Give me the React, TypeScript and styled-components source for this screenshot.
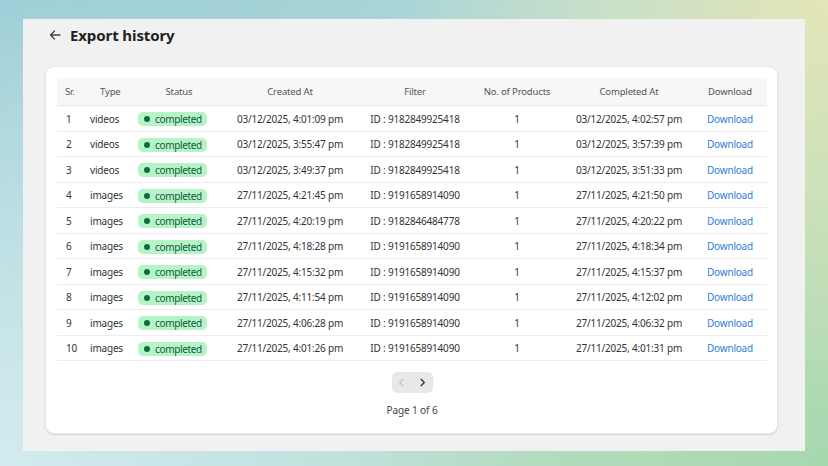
import React from 'react';
import styled, { createGlobalStyle } from 'styled-components';

const GlobalStyle = createGlobalStyle`
  html, body {
    margin: 0;
    padding: 0;
  }
  body {
    font-family: "Noto Sans", "Open Sans", Arial, sans-serif;
    width: 828px;
    height: 466px;
    overflow: hidden;
  }
`

const Backdrop = styled.div`
  width: 828px;
  height: 466px;
  box-sizing: border-box;
  padding: 19px 23px 15px 23px;
  background:
    radial-gradient(circle at 100% 0%, #e2e5b6 0%, rgba(226,229,182,0) 45%),
    radial-gradient(circle at 100% 100%, #a6d8ae 0%, rgba(166,216,174,0) 50%),
    radial-gradient(circle at 0% 100%, #d3ebee 0%, rgba(211,235,238,0) 55%),
    linear-gradient(135deg, #98cbd5 0%, #b3dbd9 50%, #c2e0c0 100%);
`

const Panel = styled.div`
  height: 100%;
  box-sizing: border-box;
  background: #f1f1f1;
  padding: 0 27px 17px 22px;
  display: flex;
  flex-direction: column;
`

const Header = styled.div`
  height: 47px;
  box-sizing: border-box;
  display: flex;
  align-items: center;
  gap: 9px;
  padding: 0 0 15px 4px;
`

const BackButton = styled.span`
  display: flex;
  align-items: center;
  color: #444;
`

const Title = styled.h1`
  margin: 0;
  font-size: 15px;
  font-weight: 700;
  color: #222;
  letter-spacing: -0.1px;
`

const Card = styled.div`
  flex: 1;
  background: #fff;
  border-radius: 9px;
  border: 1px solid #e6e6e6;
  box-shadow: 0 1px 2px rgba(0,0,0,0.12);
  padding: 11px 10px 0 11px;
  display: flex;
  flex-direction: column;
`

const cols = '25px 48px 98px 124px 126px 78px 146px 65px'

const HeadRow = styled.div`
  display: grid;
  grid-template-columns: ${cols};
  height: 27px;
  align-items: center;
  background: #f7f7f7;
  border-bottom: 1px solid #e8e8e8;
  font-size: 9.5px;
  letter-spacing: -0.15px;
  color: #555;
`

const Row = styled.div`
  display: grid;
  grid-template-columns: ${cols};
  height: 23.5px;
  padding-top: 1px;
  align-items: center;
  border-bottom: 1px solid #ececec;
  font-size: 10px;
  letter-spacing: -0.2px;
  color: #333;
`

const Cell = styled.div<{ $align?: 'left' | 'center'; $pl?: number; $pr?: number }>`
  text-align: ${p => p.$align || 'center'};
  padding-left: ${p => p.$pl || 0}px;
  padding-right: ${p => p.$pr || 0}px;
  white-space: nowrap;
`

const Badge = styled.span`
  display: inline-flex;
  align-items: center;
  gap: 5px;
  height: 14px;
  padding: 0 5px 0 6px;
  border-radius: 5px;
  background: #b6f3c6;
  color: #0f5c3c;
  font-size: 10px;
  letter-spacing: -0.35px;
`

const Dot = styled.span`
  width: 6px;
  height: 6px;
  border-radius: 50%;
  background: #0d6b47;
`

const Link = styled.a`
  color: #2f7ed8;
  text-decoration: none;
`

const Pager = styled.div`
  display: flex;
  flex-direction: column;
  align-items: center;
  padding-top: 11px;
  gap: 10px;
`

const PagerButtons = styled.div`
  display: flex;
  background: #e8e8e8;
  border-radius: 5px;
  height: 21px;
  width: 41px;
`

const PageBtn = styled.span<{ $disabled?: boolean }>`
  flex: 1;
  display: flex;
  align-items: center;
  justify-content: center;
  color: ${p => (p.$disabled ? '#c4c4c4' : '#333')};
`

const PageText = styled.div`
  font-size: 10px;
  letter-spacing: -0.1px;
  color: #444;
`

const records = [
  { type: 'videos', created: '03/12/2025, 4:01:09 pm', filter: '9182849925418', completed: '03/12/2025, 4:02:57 pm' },
  { type: 'videos', created: '03/12/2025, 3:55:47 pm', filter: '9182849925418', completed: '03/12/2025, 3:57:39 pm' },
  { type: 'videos', created: '03/12/2025, 3:49:37 pm', filter: '9182849925418', completed: '03/12/2025, 3:51:33 pm' },
  { type: 'images', created: '27/11/2025, 4:21:45 pm', filter: '9191658914090', completed: '27/11/2025, 4:21:50 pm' },
  { type: 'images', created: '27/11/2025, 4:20:19 pm', filter: '9182846484778', completed: '27/11/2025, 4:20:22 pm' },
  { type: 'images', created: '27/11/2025, 4:18:28 pm', filter: '9191658914090', completed: '27/11/2025, 4:18:34 pm' },
  { type: 'images', created: '27/11/2025, 4:15:32 pm', filter: '9191658914090', completed: '27/11/2025, 4:15:37 pm' },
  { type: 'images', created: '27/11/2025, 4:11:54 pm', filter: '9191658914090', completed: '27/11/2025, 4:12:02 pm' },
  { type: 'images', created: '27/11/2025, 4:06:28 pm', filter: '9191658914090', completed: '27/11/2025, 4:06:32 pm' },
  { type: 'images', created: '27/11/2025, 4:01:26 pm', filter: '9191658914090', completed: '27/11/2025, 4:01:31 pm' },
]

const Chevron = ({ dir }: { dir: 'left' | 'right' }) => (
  <svg width="9" height="9" viewBox="0 0 10 10" fill="none" stroke="currentColor" strokeWidth="1.5" strokeLinecap="round" strokeLinejoin="round">
    {dir === 'left' ? <path d="M6.5 1.5 3 5l3.5 3.5" /> : <path d="M3.5 1.5 7 5 3.5 8.5" />}
  </svg>
)

const App = () => {
  return (
    <Backdrop>
      <GlobalStyle />
      <Panel>
        <Header>
          <BackButton>
            <svg width="12" height="12" viewBox="0 0 12 12" fill="none" stroke="currentColor" strokeWidth="1.3" strokeLinecap="round" strokeLinejoin="round">
              <path d="M11 6H1.5M5.5 2 1.5 6l4 4" />
            </svg>
          </BackButton>
          <Title>Export history</Title>
        </Header>
        <Card>
          <HeadRow>
            <Cell $align="left" $pl={8}>Sr.</Cell>
            <Cell $align="left" $pl={18}>Type</Cell>
            <Cell>Status</Cell>
            <Cell>Created At</Cell>
            <Cell>Filter</Cell>
            <Cell>No. of Products</Cell>
            <Cell>Completed At</Cell>
            <Cell $pr={9}>Download</Cell>
          </HeadRow>
          {records.map((r, i) => (
            <Row key={i}>
              <Cell $align="left" $pl={9}>{i + 1}</Cell>
              <Cell $align="left" $pl={8}>{r.type}</Cell>
              <Cell $align="left" $pl={8}>
                <Badge><Dot />completed</Badge>
              </Cell>
              <Cell>{r.created}</Cell>
              <Cell>ID : {r.filter}</Cell>
              <Cell>1</Cell>
              <Cell>{r.completed}</Cell>
              <Cell $pr={9}><Link href="#">Download</Link></Cell>
            </Row>
          ))}
          <Pager>
            <PagerButtons>
              <PageBtn $disabled><Chevron dir="left" /></PageBtn>
              <PageBtn><Chevron dir="right" /></PageBtn>
            </PagerButtons>
            <PageText>Page 1 of 6</PageText>
          </Pager>
        </Card>
      </Panel>
    </Backdrop>
  )
}

export default App;
